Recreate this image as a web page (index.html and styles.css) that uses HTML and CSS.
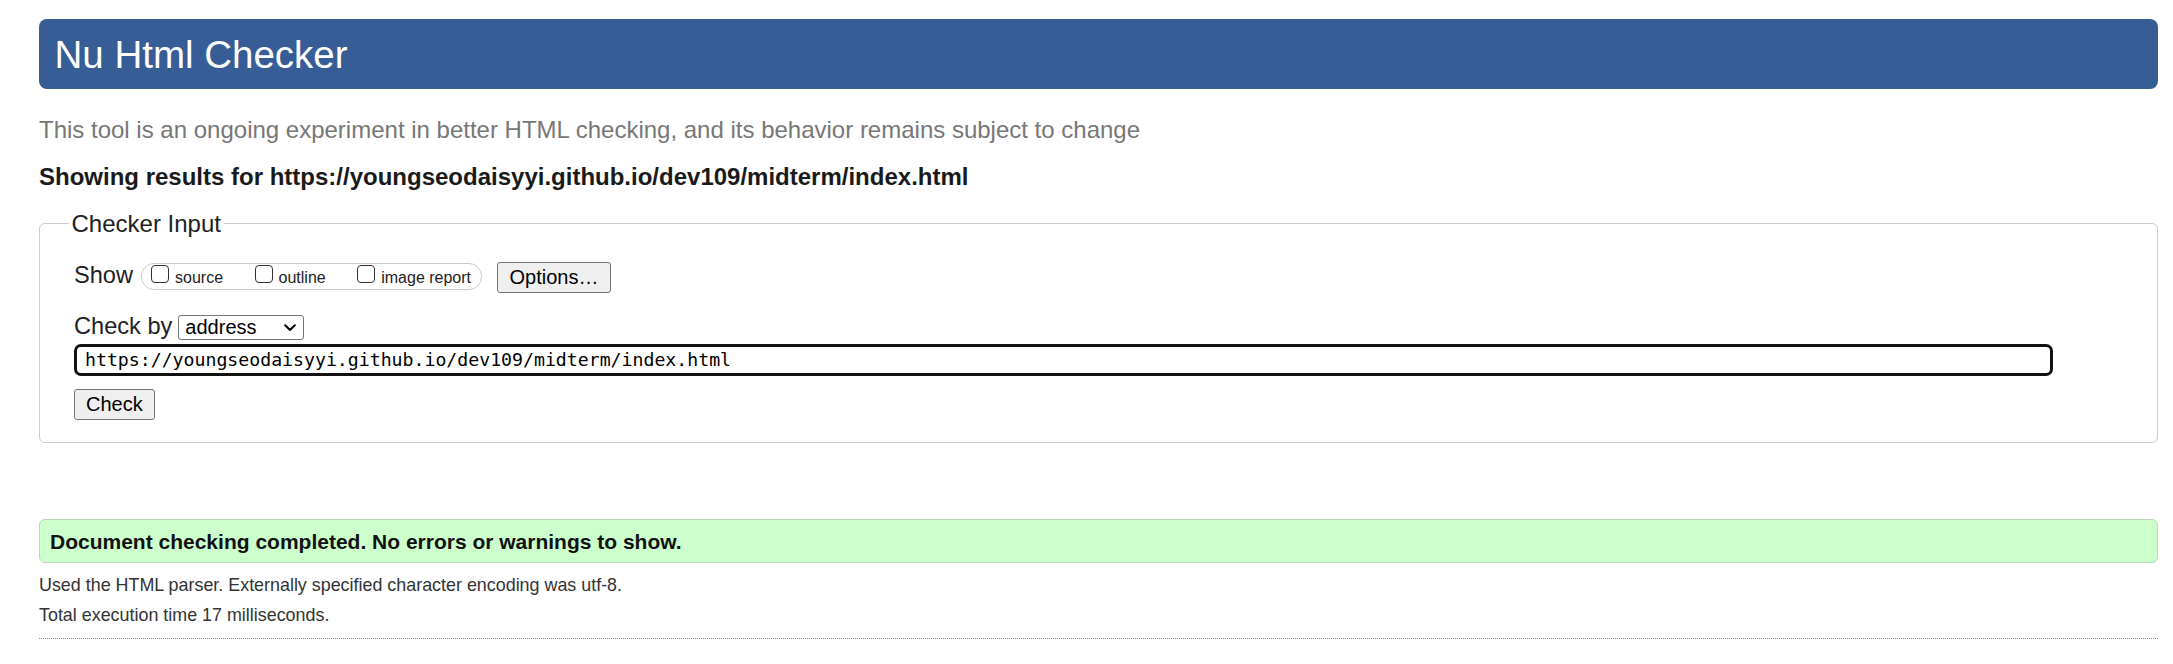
FILE: index.html
```html
<!DOCTYPE html>
<html lang="en">
<head>
<meta charset="utf-8">
<title>Nu Html Checker</title>
<link rel="stylesheet" href="styles.css">
</head>
<body>
<div class="page">
  <h1 class="title">Nu Html Checker</h1>
  <p class="intro">This tool is an ongoing experiment in better HTML checking, and its behavior remains subject to change</p>
  <p class="showing">Showing results for https://youngseodaisyyi.github.io/dev109/midterm/index.html</p>
  <form class="checker">
    <fieldset class="input-set">
      <legend class="legend">Checker Input</legend>
      <div class="row row-show">
        <span class="label-big">Show</span>
        <span class="opts">
          <label class="opt"><input type="checkbox" class="cb"><span class="opt-text">source</span></label>
          <label class="opt"><input type="checkbox" class="cb"><span class="opt-text">outline</span></label>
          <label class="opt"><input type="checkbox" class="cb"><span class="opt-text">image report</span></label>
        </span>
        <button type="button" class="btn btn-options">Options…</button>
      </div>
      <div class="row row-by">
        <span class="label-big">Check by</span>
        <span class="select-wrap">
          <select class="select"><option>address</option></select>
          <svg class="chev" width="12" height="8" viewBox="0 0 12 8" aria-hidden="true"><path d="M1.2 1.2 L6 6 L10.8 1.2" fill="none" stroke="#000" stroke-width="2" stroke-linecap="round" stroke-linejoin="round"/></svg>
        </span>
      </div>
      <div class="row row-url">
        <input class="url" type="text" value="https://youngseodaisyyi.github.io/dev109/midterm/index.html">
      </div>
      <div class="row row-check">
        <button type="button" class="btn btn-check">Check</button>
      </div>
    </fieldset>
  </form>
  <p class="success">Document checking completed. No errors or warnings to show.</p>
  <p class="details details-first">Used the HTML parser. Externally specified character encoding was utf-8.</p>
  <p class="details">Total execution time 17 milliseconds.</p>
  <hr class="rule">
</div>
</body>
</html>
```

FILE: styles.css
```css
html, body {
  margin: 0;
  padding: 0;
  background: #fff;
}

body {
  font-family: "Liberation Sans", Arial, sans-serif;
  color: #222;
}

.page {
  padding: 19px 15px 0 39px;
}

.title {
  margin: 0;
  height: 70px;
  box-sizing: border-box;
  padding: 2px 0 0 15.5px;
  display: flex;
  align-items: center;
  background: #365d95;
  color: #fff;
  font-size: 38.5px;
  line-height: 44px;
  font-weight: normal;
  border-radius: 8px;
}

.intro {
  margin: 27px 0 0;
  font-size: 24px;
  line-height: 28px;
  color: #777;
}

.showing {
  margin: 19px 0 0;
  font-size: 24px;
  line-height: 28px;
  font-weight: bold;
  color: #1a1a1a;
}

.checker {
  margin: 0;
}

.input-set {
  margin: 19px 0 0;
  padding: 25px 34px 22px;
  border: 1px solid #cccccc;
  border-radius: 6px;
  min-width: 0;
}

.legend {
  font-size: 24px;
  line-height: 27px;
  padding: 0 3px;
  margin-left: -5.5px;
  color: #222;
}

.row {
  display: flex;
  align-items: flex-start;
}

.label-big {
  font-size: 23.6px;
  line-height: 27px;
  color: #222;
}

.row-show {
  height: 31px;
}

.opts {
  display: flex;
  align-items: flex-start;
  gap: 31.5px;
  height: 27px;
  box-sizing: border-box;
  margin: 1px 0 0 8px;
  padding: 0 10px 0 9px;
  border: 1px solid #cccccc;
  border-radius: 13px;
}

.opt {
  display: flex;
  align-items: flex-start;
}

.cb {
  appearance: none;
  -webkit-appearance: none;
  width: 18px;
  height: 18px;
  margin: 1px 6px 0 0;
  box-sizing: border-box;
  border: 1px solid #333;
  border-radius: 4px;
  background: #fff;
}

.opt-text {
  font-size: 16px;
  line-height: 18px;
  margin-top: 5px;
  color: #222;
}

.btn {
  font-family: "Liberation Sans", Arial, sans-serif;
  font-size: 20px;
  line-height: 23px;
  height: 31px;
  box-sizing: border-box;
  background: #efefef;
  color: #000;
  border: 1px solid #767676;
  border-radius: 3px;
}

.btn-options {
  margin-left: 15px;
  padding: 0 11.5px;
}

.row-by {
  margin-top: 19.5px;
}

.select-wrap {
  position: relative;
  display: inline-block;
  margin: 2px 0 0 6px;
}

.select {
  appearance: none;
  -webkit-appearance: none;
  display: block;
  width: 126px;
  height: 25px;
  box-sizing: border-box;
  padding: 0 0 0 6px;
  border: 1px solid #767676;
  border-radius: 3px;
  background: #fff;
  color: #000;
  font-family: "Liberation Sans", Arial, sans-serif;
  font-size: 20px;
  line-height: 23px;
}

.chev {
  position: absolute;
  right: 8px;
  top: 9px;
  pointer-events: none;
}

.row-url {
  margin-top: 4px;
}

.url {
  width: 1979px;
  height: 32px;
  box-sizing: border-box;
  padding: 0 7px 0 8px;
  border: 3px solid #111;
  border-radius: 7px;
  outline: none;
  font-family: "DejaVu Sans Mono", "Liberation Mono", monospace;
  font-size: 18.2px;
  color: #000;
  background: #fff;
}

.row-check {
  margin-top: 13px;
}

.btn-check {
  padding: 0 11px;
}

.success {
  margin: 76px 0 0;
  padding: 9px 10px 8px;
  border: 1px solid #bcd6bc;
  border-radius: 6px;
  background: #ccffcc;
  font-size: 21px;
  line-height: 25px;
  font-weight: bold;
  color: #111;
}

.details {
  margin: 0;
  font-size: 17.9px;
  line-height: 30px;
  color: #333;
}

.details-first {
  margin-top: 7px;
}

.rule {
  margin: 8px 0 0;
  height: 0;
  border: 0;
  border-top: 1px dotted #888;
}
```
